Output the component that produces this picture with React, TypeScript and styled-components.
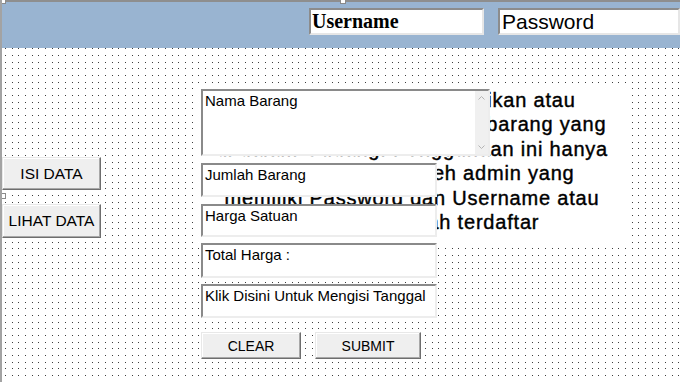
import React from "react";
import styled, { createGlobalStyle } from "styled-components";

const GlobalStyle = createGlobalStyle`
    html, body {
        margin: 0;
        padding: 0;
        background: #ffffff;
    }
    body {
        font-family: "Liberation Sans", Arial, sans-serif;
    }
`;

// designer grid: a 20px tile holding 3 x 3 dots (roughly 6.67px apart)
const offsX = [3, 10, 16];
const offsY = [7, 14, 0];
const gridDots = offsY
    .flatMap((y) =>
        offsX.map(
            (x) =>
                `radial-gradient(circle at ${x + 0.5}px ${y + 0.5}px, #3c3c3c 0.45px, transparent 0.9px)`
        )
    )
    .join(", ");

const StyledForm = styled.div`
    position: relative;
    width: 680px;
    height: 382px;
    overflow: hidden;
    border-left: 2px solid #a3a3a3;
    box-sizing: border-box;
    display: flex;
    flex-direction: column;
`;

const StyledHandle = styled.span<{ $x: number; $y: number }>`
    position: absolute;
    left: ${(p) => p.$x}px;
    top: ${(p) => p.$y}px;
    width: 4px;
    height: 4px;
    background: #ffffff;
    border: 1px solid #8a8a8a;
    z-index: 5;
`;

const StyledBand = styled.div`
    height: 48px;
    box-sizing: border-box;
    border-top: 2px solid #8e8e8e;
    background: #99b4d1;
    display: flex;
    align-items: flex-start;
    gap: 14px;
    padding: 6px 0 0 307px;
`;

const StyledLoginBox = styled.div<{ $width: number; $serif?: boolean }>`
    width: ${(p) => p.$width}px;
    height: 27px;
    box-sizing: border-box;
    flex-shrink: 0;
    background: #ffffff;
    border: 2px solid;
    border-color: #8c8c8c #e6e6e6 #e6e6e6 #8c8c8c;
    padding: 0 ${(p) => (p.$serif ? "1px" : "2px")};
    font-family: ${(p) =>
        p.$serif ? `"Liberation Serif", "Times New Roman", serif` : `"Liberation Sans", Arial, sans-serif`};
    font-weight: ${(p) => (p.$serif ? 700 : 400)};
    font-size: ${(p) => (p.$serif ? "20px" : "21px")};
    line-height: 23px;
    color: #000000;
    white-space: nowrap;
    overflow: hidden;
`;

const StyledCanvas = styled.div`
    position: relative;
    flex: 1;
    background-color: #ffffff;
    background-image: ${gridDots};
    background-size: 20px 20px;
    display: flex;
    align-items: flex-start;
`;

const StyledCaption = styled.div`
    position: absolute;
    left: 195px;
    top: 37px;
    width: 430px;
    height: 158px;
    box-sizing: border-box;
    padding-top: 3px;
    background: #ffffff;
    text-align: center;
    font-size: 20px;
    line-height: 24.4px;
    letter-spacing: 0.8px;
    -webkit-text-stroke: 0.4px #000000;
    color: #000000;
`;

const StyledCaptionLine = styled.span`
    display: block;
    white-space: nowrap;
`;

const StyledSideColumn = styled.div`
    position: relative;
    width: 99px;
    padding-top: 109px;
    display: flex;
    flex-direction: column;
    gap: 14px;
`;

const StyledButton = styled.button<{ $width: number; $height: number; $size: number }>`
    width: ${(p) => p.$width}px;
    height: ${(p) => p.$height}px;
    box-sizing: border-box;
    margin: 0;
    padding: 0;
    background: #efefef;
    border: 1px solid;
    border-color: #e8e8e8 #6e6e6e #6e6e6e #e8e8e8;
    box-shadow: inset -1px -1px 0 #a8a8a8, inset 1px 1px 0 #ffffff;
    font-family: "Liberation Sans", Arial, sans-serif;
    font-size: ${(p) => p.$size}px;
    color: #000000;
    text-align: center;
`;

const StyledFieldColumn = styled.div`
    position: relative;
    margin-left: 100px;
    padding-top: 41px;
    display: flex;
    flex-direction: column;
`;

const StyledField = styled.div<{ $width: number; $height: number; $gap: number }>`
    width: ${(p) => p.$width}px;
    height: ${(p) => p.$height}px;
    margin-bottom: ${(p) => p.$gap}px;
    box-sizing: border-box;
    background: #ffffff;
    border: 2px solid;
    border-color: #8a8a8a #ededed #ededed #8a8a8a;
    display: flex;
    font-size: 15px;
    line-height: 17px;
    color: #000000;
`;

const StyledFieldText = styled.div`
    flex: 1;
    padding: 1px 2px;
    white-space: nowrap;
    overflow: hidden;
`;

const StyledScrollbar = styled.div`
    width: 13px;
    background: #f0f0f0;
    display: flex;
    flex-direction: column;
    justify-content: space-between;
    align-items: center;
    padding: 5px 0 5px;
    box-sizing: border-box;
`;

const StyledButtonRow = styled.div`
    display: flex;
    gap: 14px;
    margin-top: 14px;
`;

function Chevron({ down }: { down?: boolean }) {
    return (
        <svg width="7" height="4" viewBox="0 0 7 4">
            <polyline
                points={down ? "0.5,0.5 3.5,3.5 6.5,0.5" : "0.5,3.5 3.5,0.5 6.5,3.5"}
                fill="none"
                stroke="#b4b4b4"
                strokeWidth="1"
            />
        </svg>
    );
}

const captionLines = [
    "Aplikasi ini untuk mengisikan atau",
    "memperlihatkan data–data\u00a0 barang yang",
    "di dalam Gudang. Penggunaan ini hanya",
    "dapat digunakan oleh admin yang",
    "memiliki Password dan Username atau",
    "Akun yang sudah terdaftar",
];

const fields = [
    { label: "Jumlah Barang", height: 34, gap: 7 },
    { label: "Harga Satuan", height: 33, gap: 6 },
    { label: "Total Harga :", height: 35, gap: 6 },
    { label: "Klik Disini Untuk Mengisi Tanggal", height: 34, gap: 0 },
];

export default function App() {
    return (
        <>
            <GlobalStyle />
            <StyledForm>
                <StyledHandle $x={-2} $y={-2} />
                <StyledHandle $x={338} $y={-2} />
                <StyledHandle $x={-2} $y={193} />

                <StyledBand>
                    <StyledLoginBox $width={175} $serif>
                        Username
                    </StyledLoginBox>
                    <StyledLoginBox $width={182}>Password</StyledLoginBox>
                </StyledBand>

                <StyledCanvas>
                    <StyledCaption>
                        {captionLines.map((line) => (
                            <StyledCaptionLine key={line}>{line}</StyledCaptionLine>
                        ))}
                    </StyledCaption>

                    <StyledSideColumn>
                        <StyledButton $width={99} $height={33} $size={15.5}>
                            ISI DATA
                        </StyledButton>
                        <StyledButton $width={99} $height={34} $size={15.5}>
                            LIHAT DATA
                        </StyledButton>
                    </StyledSideColumn>

                    <StyledFieldColumn>
                        <StyledField $width={289} $height={67} $gap={7}>
                            <StyledFieldText>Nama Barang</StyledFieldText>
                            <StyledScrollbar>
                                <Chevron />
                                <Chevron down />
                            </StyledScrollbar>
                        </StyledField>
                        {fields.map((f) => (
                            <StyledField key={f.label} $width={236} $height={f.height} $gap={f.gap}>
                                <StyledFieldText>{f.label}</StyledFieldText>
                            </StyledField>
                        ))}
                        <StyledButtonRow>
                            <StyledButton $width={100} $height={27} $size={14}>
                                CLEAR
                            </StyledButton>
                            <StyledButton $width={106} $height={27} $size={14}>
                                SUBMIT
                            </StyledButton>
                        </StyledButtonRow>
                    </StyledFieldColumn>
                </StyledCanvas>
            </StyledForm>
        </>
    );
}
